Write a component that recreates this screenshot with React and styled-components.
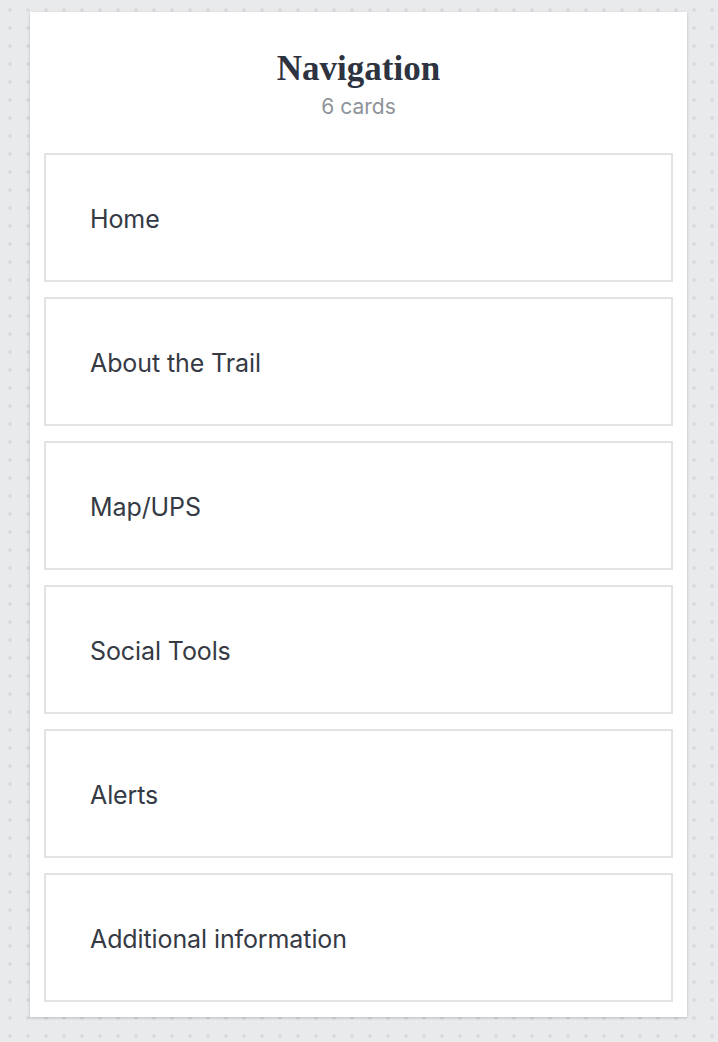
import styled, { createGlobalStyle } from 'styled-components';

const cards = [
  'Home',
  'About the Trail',
  'Map/UPS',
  'Social Tools',
  'Alerts',
  'Additional information',
];

const GlobalStyle = createGlobalStyle`
  html, body {
    margin: 0;
    padding: 0;
  }

  body {
    min-height: 1042px;
    background-color: #e9eaec;
    background-image: radial-gradient(#dadbde 1.7px, transparent 1.9px);
    background-size: 18px 18px;
    background-position: 1px 1px;
    font-family: Inter, "Noto Sans", sans-serif;
  }
`;

export default function App() {
  return (
    <>
      <GlobalStyle />
      <Page>
        <Board>
          <Header>
            <Title>Navigation</Title>
            <Count>{cards.length} cards</Count>
          </Header>
          <CardList>
            {cards.map((label) => (
              <Card key={label}>{label}</Card>
            ))}
          </CardList>
        </Board>
      </Page>
    </>
  );
}

const Page = styled.div`
  padding: 12px 31px 25px 30px;
`;

const Board = styled.section`
  background: #ffffff;
  box-shadow: 0 1px 3px rgba(30, 35, 45, 0.16), 0 1px 2px rgba(30, 35, 45, 0.08);
  padding: 0 14px 15px;
`;

const Header = styled.header`
  display: flex;
  flex-direction: column;
  align-items: center;
  padding: 37px 0 34px;
`;

const Title = styled.h1`
  margin: 0;
  font-family: "Liberation Serif", "DejaVu Serif", serif;
  font-weight: 700;
  font-size: 35px;
  line-height: 40px;
  color: #2d3340;
`;

const Count = styled.span`
  margin-top: 6px;
  font-size: 21px;
  line-height: 24px;
  color: #8e9299;
`;

const CardList = styled.div`
  display: flex;
  flex-direction: column;
  gap: 15px;
`;

const Card = styled.div`
  display: flex;
  align-items: center;
  height: 129px;
  box-sizing: border-box;
  padding: 2px 44px 0;
  border: 2px solid #e3e3e3;
  font-size: 25px;
  letter-spacing: -0.1px;
  color: #353a45;
`;
